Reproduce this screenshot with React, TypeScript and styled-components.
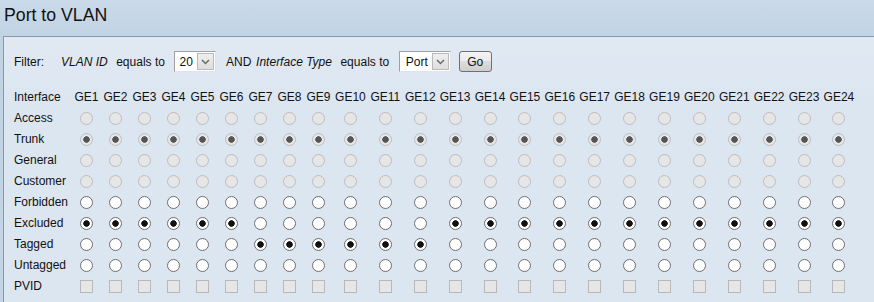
import React from "react";
import styled, { createGlobalStyle } from "styled-components";

const GlobalStyle = createGlobalStyle`
  html, body {
    margin: 0;
    padding: 0;
  }
  body {
    background: linear-gradient(#cad9e8, #c1d3e3 40px, #c3d4e4);
    font-family: "Liberation Sans", Arial, sans-serif;
    font-size: 12px;
    color: #111;
    min-height: 302px;
    overflow: hidden;
  }
`;

const Page = styled.div`
  display: flex;
  flex-direction: column;
  height: 302px;
`;

const Title = styled.h1`
  margin: 0;
  height: 36px;
  padding: 5px 0 0 4px;
  box-sizing: border-box;
  font-size: 17.7px;
  font-weight: normal;
  line-height: 20px;
  color: #111;
`;

const Panel = styled.div`
  flex: 1;
  margin-left: 3px;
  border-top: 1px solid #8499ab;
  border-left: 1px solid #8499ab;
  background: linear-gradient(#e1eaf3, #dce6f1 60px, #dce6f1);
  padding: 14px 0 0 10px;
`;

const FilterBar = styled.div`
  display: flex;
  align-items: center;
  height: 21px;
  white-space: nowrap;
`;

const FilterLabel = styled.span`
  margin-right: 17px;
`;

const FieldName = styled.span`
  font-style: italic;
  margin-right: 8.5px;
`;

const OpText = styled.span`
  margin-right: 9.6px;
`;

const AndText = styled.span`
  margin-right: 4.7px;
`;

const SelectBox = styled.div<{ $width: number }>`
  width: ${(p) => p.$width}px;
  height: 21px;
  box-sizing: border-box;
  display: flex;
  align-items: center;
  justify-content: space-between;
  background: #fff;
  border-top: 1px solid #a0a0a0;
  border-left: 1px solid #a0a0a0;
  border-right: 1px solid #e3e3e3;
  border-bottom: 1px solid #e3e3e3;
  padding: 0 1px 0 4px;
  margin-right: 9.6px;
  font-size: 12px;
`;

const SelectValue = styled.span<{ $indent: number }>`
  padding-left: ${(p) => p.$indent}px;
`;

const ArrowButton = styled.span`
  width: 17px;
  height: 17px;
  box-sizing: border-box;
  border: 1px solid #b9b9b9;
  background: linear-gradient(#efefef, #dedede);
  display: flex;
  align-items: center;
  justify-content: center;
`;

const GoButton = styled.button`
  width: 33px;
  height: 21px;
  margin-left: -1.6px;
  padding: 0;
  border: 1px solid #707070;
  border-radius: 3px;
  background: linear-gradient(#f3f3f3, #ebebeb 45%, #dddddd 50%, #cfcfcf);
  font-family: "Liberation Sans", Arial, sans-serif;
  font-size: 12px;
  color: #111;
`;

const MatrixTable = styled.table`
  border-collapse: collapse;
  margin-top: 14px;
  table-layout: fixed;
`;

const Row = styled.tr`
  height: 21px;
`;

const LabelCell = styled.td`
  width: 58px;
  padding: 0;
  text-align: left;
  white-space: nowrap;
`;

const PortHead = styled.td<{ $wide: boolean }>`
  width: ${(p) => (p.$wide ? 34.9 : 29)}px;
  padding: 0;
  text-align: center;
  white-space: nowrap;
`;

const Cell = styled.td<{ $wide: boolean }>`
  width: ${(p) => (p.$wide ? 34.9 : 29)}px;
  padding: 0;
  text-align: center;
  vertical-align: middle;
`;

const Radio = styled.span<{ $checked: boolean; $disabled: boolean }>`
  display: inline-block;
  vertical-align: middle;
  width: 13px;
  height: 13px;
  box-sizing: border-box;
  border-radius: 50%;
  border: 1px solid ${(p) => (p.$disabled ? "#bdbdbd" : "#6e6e6e")};
  background: ${(p) => {
    const dot = p.$disabled ? "#555555" : "#111";
    const fill = p.$disabled ? "#e6e6e6" : "#fff";
    return p.$checked
      ? `radial-gradient(circle at center, ${dot} 0, ${dot} 2.9px, ${fill} 3.6px)`
      : fill;
  }};
`;

const Checkbox = styled.span`
  display: inline-block;
  vertical-align: middle;
  width: 13px;
  height: 13px;
  box-sizing: border-box;
  border: 1px solid #b8b8b8;
  background: #e6e6e6;
`;

const Chevron = () => (
  <svg width="9" height="6" viewBox="0 0 9 6">
    <path d="M1 1 L4.5 4.5 L8 1" fill="none" stroke="#6a6a6a" strokeWidth="1.5" />
  </svg>
);

const ports = Array.from({ length: 24 }, (_, i) => i + 1);

type RowDef = {
  label: string;
  disabled: boolean;
  checked: (port: number) => boolean;
};

const rows: RowDef[] = [
  { label: "Access", disabled: true, checked: () => false },
  { label: "Trunk", disabled: true, checked: () => true },
  { label: "General", disabled: true, checked: () => false },
  { label: "Customer", disabled: true, checked: () => false },
  { label: "Forbidden", disabled: false, checked: () => false },
  { label: "Excluded", disabled: false, checked: (p) => p < 7 || p > 12 },
  { label: "Tagged", disabled: false, checked: (p) => p >= 7 && p <= 12 },
  { label: "Untagged", disabled: false, checked: () => false },
];

export default function App() {
  return (
    <>
      <GlobalStyle />
      <Page>
        <Title>Port to VLAN</Title>
        <Panel>
          <FilterBar>
            <FilterLabel>Filter:</FilterLabel>
            <FieldName>VLAN ID</FieldName>
            <OpText>equals to</OpText>
            <SelectBox $width={42}>
              <SelectValue $indent={0}>20</SelectValue>
              <ArrowButton>
                <Chevron />
              </ArrowButton>
            </SelectBox>
            <AndText>AND</AndText>
            <FieldName>Interface Type</FieldName>
            <OpText>equals to</OpText>
            <SelectBox $width={52}>
              <SelectValue $indent={2}>Port</SelectValue>
              <ArrowButton>
                <Chevron />
              </ArrowButton>
            </SelectBox>
            <GoButton>Go</GoButton>
          </FilterBar>
          <MatrixTable>
            <tbody>
              <Row>
                <LabelCell>Interface</LabelCell>
                {ports.map((p) => (
                  <PortHead key={p} $wide={p >= 10}>
                    GE{p}
                  </PortHead>
                ))}
              </Row>
              {rows.map((r) => (
                <Row key={r.label}>
                  <LabelCell>{r.label}</LabelCell>
                  {ports.map((p) => (
                    <Cell key={p} $wide={p >= 10}>
                      <Radio $checked={r.checked(p)} $disabled={r.disabled} />
                    </Cell>
                  ))}
                </Row>
              ))}
              <Row>
                <LabelCell>PVID</LabelCell>
                {ports.map((p) => (
                  <Cell key={p} $wide={p >= 10}>
                    <Checkbox />
                  </Cell>
                ))}
              </Row>
            </tbody>
          </MatrixTable>
        </Panel>
      </Page>
    </>
  );
}
